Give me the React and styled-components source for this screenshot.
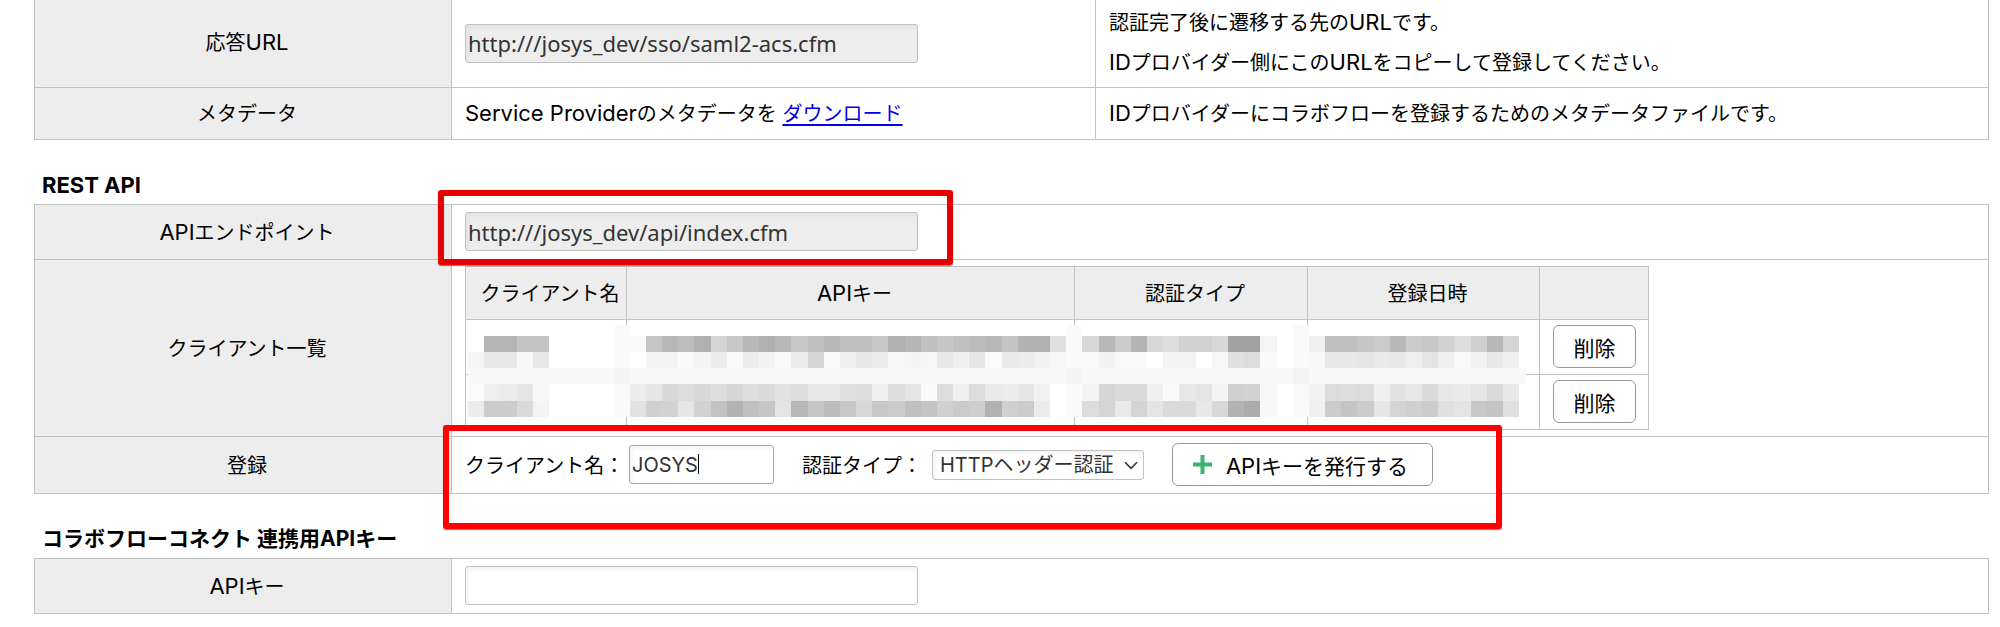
import React from 'react';
import styled, { createGlobalStyle } from 'styled-components';

const GlobalStyle = createGlobalStyle`
  * { box-sizing: border-box; }
  body {
    margin: 0;
    background: #fff;
    color: #000;
    font: 20px/40px Inter, "Noto Sans CJK JP", sans-serif;
  }
  input, select, button { font-family: inherit; margin: 0; }
`;

const line = '#c2c2c2';

const Page = styled.main`
  padding: 0 11px 14px 34px;
`;

const Latin = styled.span`
  font-size: 22px;
  line-height: 1;
`;

const Heading = styled.h2`
  margin: 24px 0 0;
  padding: 2px 0 0 8px;
  font-size: ${(p) => (p.$large ? 22 : 21)}px;
  font-weight: 700;
  line-height: 38px;
`;

const SettingsTable = styled.table`
  width: 100%;
  border-collapse: collapse;
  table-layout: fixed;
  border: 1px solid ${line};
  border-top-width: ${(p) => (p.$continued ? '0' : '1px')};
`;

const LabelCol = styled.col`
  width: 417px;
`;

const ValueCol = styled.col`
  width: 644px;
`;

const LabelCell = styled.th`
  padding: ${(p) => (p.$continued ? '0' : '2px')} 0 0 8px;
  border: 1px solid ${line};
  border-top-width: ${(p) => (p.$continued ? '0' : '1px')};
  background: #ededed;
  font-weight: 400;
  text-align: center;
`;

const ValueCell = styled.td`
  height: ${(p) => p.$height || 55}px;
  padding: ${(p) => (p.$text ? '2px' : '0')} 13px 0;
  border: 1px solid ${line};
  border-top-width: ${(p) => (p.$continued ? '0' : '1px')};
  vertical-align: middle;
`;

const Anchor = styled.div`
  position: relative;
  display: flex;
  align-items: center;
`;

const Callout = styled.div`
  position: absolute;
  z-index: 2;
  top: ${(p) => p.$top}px;
  left: ${(p) => p.$left}px;
  width: ${(p) => p.$width}px;
  height: ${(p) => p.$height}px;
  border: 6px solid ${(p) => p.$color};
  border-radius: 3px;
  box-shadow: 0 1px 1px rgba(0, 0, 0, 0.5);
  pointer-events: none;
`;

const TextField = styled.input`
  display: block;
  width: ${(p) => p.$width || 453}px;
  height: 39px;
  padding: 0 2px;
  border: 1px solid ${(p) => (p.$active ? '#f0983a' : '#c2c2c2')};
  border-radius: 3px;
  outline: none;
  background: ${(p) => (p.readOnly ? '#ededed' : '#fff')};
  box-shadow: inset 2px 2px 4px ${(p) => (p.readOnly ? '#e2e2e2' : '#f1f1f1')};
  color: #333;
  font-family: ${(p) => (p.readOnly ? '"Noto Sans", sans-serif' : 'inherit')};
  font-size: ${(p) => (p.readOnly ? 22 : 20)}px;
`;

const Link = styled.a`
  color: #0000ee;
  text-decoration: underline;
  text-underline-offset: 3px;
`;

const ClientTable = styled.table`
  width: 1184px;
  border-collapse: collapse;
  table-layout: fixed;
`;

const ClientCol = styled.col`
  width: ${(p) => p.$width}px;
`;

const ClientHead = styled.th`
  height: 53px;
  padding: 3px 0 0 8px;
  border: 1px solid ${line};
  background: #ededed;
  font-weight: 400;
  text-align: center;
  white-space: nowrap;
`;

const ClientCell = styled.td`
  height: 55px;
  padding: 0 13px;
  border: 1px solid ${line};
`;

const Button = styled.button`
  display: flex;
  align-items: center;
  justify-content: center;
  gap: 14px;
  height: 43px;
  width: ${(p) => (p.$wide ? '261px' : '83px')};
  padding: 0 ${(p) => (p.$wide ? '4px' : '0')} 0 0;
  border: 1px solid #999;
  border-radius: 6px;
  background: #fff;
  color: #000;
  font-size: 21px;
  white-space: nowrap;
`;

const Mosaic = styled.svg`
  position: absolute;
  z-index: 1;
  top: 59px;
  left: 3px;
  width: 1059px;
  height: 92px;
`;

const Field = styled.div`
  display: flex;
  align-items: center;
  margin-right: ${(p) => p.$after}px;
`;

const FieldLabel = styled.label`
  display: block;
  width: ${(p) => p.$width}px;
  padding-top: 2px;
  white-space: nowrap;
`;

const Focused = styled.div`
  position: relative;
`;

const Caret = styled.span`
  position: absolute;
  top: 9px;
  left: 69px;
  width: 1px;
  height: 20px;
  background: #000;
`;

const SelectBox = styled.div`
  position: relative;
`;

const Select = styled.select`
  display: block;
  appearance: none;
  width: 212px;
  height: 30px;
  padding: 0 28px 0 7px;
  border: 1px solid #c2c2c2;
  border-radius: 3px;
  background: #fff;
  box-shadow: inset 2px 2px 4px #f1f1f1;
  color: #333;
  font-size: 20px;
  line-height: 28px;
`;

const Chevron = styled.svg`
  position: absolute;
  top: 11px;
  right: 6px;
  pointer-events: none;
`;

/* Grey levels of the masked client data, two hex digits per tile. */
const maskRows = [
  'ffb5b5c4c4fffffffffafac6b8beb0d4c8b8b0b8c8c0b8c0c0c8b0b6c0c6c0bcb8c4b2b2e0fad8b8ccb4d8ded2d2d8a2a2f5fffaf0c0c0c6cab8ccc8d2dcd0b8d4',
  'f5e8e8f8e8fffffffffafff4f3faf4ecfaecf2faecd6faf0e8ecf6f4f6e8f0e6fbeaecf2f7fafaf2fafafff3f3fff6e0dcfafffaf8e8e8e6eae8eee4f0faf2e8f0',
  null,
  'fbeeece6f8fffffffffaece6d8dcd8ded6dedae2dee8e8e0dcf0dee6fadcf0dceaece6f2fffaf3d6dadaf0fae8e4f4d0d2f8fffaf2dcdedcf0e2e8dae8eae4dae8',
  'ecccccdaf4fffffffffae2d0d2e6d2c2b2c0c6e4b8c6bcc8d8c8ccc0c4d0caceb2d0ccecfffadcd4ead4e4dadae8d8b2acf8fffaf0ccc4cce6d4d0cce0e4c8c4e0',
];
const dividers = [9, 37, 51];
const tile = 16.17;

function ClientMask() {
  return (
    <Mosaic viewBox="0 0 1059 92" shapeRendering="crispEdges" aria-hidden="true">
      {dividers.map((c) => (
        <rect key={c} x={c * tile} y="0" width={tile} height="12" fill="#fafafa" />
      ))}
      {maskRows.map((row, r) => {
        const y = 11 + r * 16.15;
        if (!row) {
          return (
            <g key={r}>
              <rect x="0" y={y} width="1058" height="16.15" fill="#f9f9f9" />
              {dividers.map((c) => (
                <rect key={c} x={c * tile} y={y} width={tile} height="16.15" fill="#f4f4f4" />
              ))}
            </g>
          );
        }
        return row.match(/../g).map((v, c) => (
          <rect key={`${r}-${c}`} x={c * tile} y={y} width={tile} height="16.15" fill={`#${v}${v}${v}`} />
        ));
      })}
    </Mosaic>
  );
}

export default function App() {
  return (
    <>
      <GlobalStyle />
      <Page>
        <SettingsTable $continued>
          <colgroup>
            <LabelCol />
            <ValueCol />
            <col />
          </colgroup>
          <tbody>
            <tr>
              <LabelCell $continued scope="row"><label htmlFor="acs">応答<Latin>URL</Latin></label></LabelCell>
              <ValueCell $continued $height={87}>
                <TextField id="acs" readOnly defaultValue="http:///josys_dev/sso/saml2-acs.cfm" />
              </ValueCell>
              <ValueCell $continued $height={87}>
                認証完了後に遷移する先の<Latin>URL</Latin>です。<br />
                <Latin>ID</Latin>プロバイダー側にこの<Latin>URL</Latin>をコピーして登録してください。
              </ValueCell>
            </tr>
            <tr>
              <LabelCell scope="row">メタデータ</LabelCell>
              <ValueCell $text $height={52}>
                <Latin>Service Provider</Latin>のメタデータを <Link href="#metadata">ダウンロード</Link>
              </ValueCell>
              <ValueCell $text $height={52}>
                <Latin>ID</Latin>プロバイダーにコラボフローを登録するためのメタデータファイルです。
              </ValueCell>
            </tr>
          </tbody>
        </SettingsTable>

        <Heading $large>REST API</Heading>
        <SettingsTable>
          <colgroup>
            <LabelCol />
            <col />
          </colgroup>
          <tbody>
            <tr>
              <LabelCell scope="row"><label htmlFor="endpoint"><Latin>API</Latin>エンドポイント</label></LabelCell>
              <ValueCell>
                <Anchor>
                  <TextField id="endpoint" readOnly defaultValue="http:///josys_dev/api/index.cfm" />
                  <Callout $top={-22} $left={-27} $width={515} $height={75} $color="#e60000" />
                </Anchor>
              </ValueCell>
            </tr>
            <tr>
              <LabelCell scope="row">クライアント一覧</LabelCell>
              <ValueCell $height={177}>
                <Anchor>
                  <ClientTable>
                    <colgroup>
                      <ClientCol $width={161} />
                      <ClientCol $width={448} />
                      <ClientCol $width={233} />
                      <ClientCol $width={232} />
                      <ClientCol $width={109} />
                    </colgroup>
                    <thead>
                      <tr>
                        <ClientHead>クライアント名</ClientHead>
                        <ClientHead><Latin>API</Latin>キー</ClientHead>
                        <ClientHead>認証タイプ</ClientHead>
                        <ClientHead>登録日時</ClientHead>
                        <ClientHead />
                      </tr>
                    </thead>
                    <tbody>
                      {[1, 2].map((id) => (
                        <tr key={id}>
                          <ClientCell />
                          <ClientCell />
                          <ClientCell />
                          <ClientCell />
                          <ClientCell><Button type="button">削除</Button></ClientCell>
                        </tr>
                      ))}
                    </tbody>
                  </ClientTable>
                  <ClientMask />
                </Anchor>
              </ValueCell>
            </tr>
            <tr>
              <LabelCell scope="row">登録</LabelCell>
              <ValueCell $height={57}>
                <Anchor>
                  <Field $after={28}>
                    <FieldLabel htmlFor="client" $width={164}>クライアント名：</FieldLabel>
                    <Focused>
                      <TextField id="client" $width={145} $active defaultValue="JOSYS" />
                      <Caret />
                    </Focused>
                  </Field>
                  <Field $after={28}>
                    <FieldLabel htmlFor="auth" $width={130}>認証タイプ：</FieldLabel>
                    <SelectBox>
                      <Select id="auth" defaultValue="header">
                        <option value="header">HTTPヘッダー認証</option>
                      </Select>
                      <Chevron width="14" height="9" viewBox="0 0 14 9" fill="none" stroke="#333" strokeWidth="1.6">
                        <path d="M1 1.2 7 7.4 13 1.2" />
                      </Chevron>
                    </SelectBox>
                  </Field>
                  <Button type="button" $wide>
                    <svg width="19" height="19" viewBox="0 0 19 19" stroke="#3cb371" strokeWidth="4" aria-hidden="true">
                      <path d="M9.5 0v19M0 9.5h19" />
                    </svg>
                    <span><Latin>API</Latin>キーを発行する</span>
                  </Button>
                  <Callout $top={-18} $left={-22} $width={1059} $height={104} $color="#ff0000" />
                </Anchor>
              </ValueCell>
            </tr>
          </tbody>
        </SettingsTable>

        <Heading>コラボフローコネクト 連携用API<span>キー</span></Heading>
        <SettingsTable>
          <colgroup>
            <LabelCol />
            <col />
          </colgroup>
          <tbody>
            <tr>
              <LabelCell scope="row"><label htmlFor="key"><Latin>API</Latin>キー</label></LabelCell>
              <ValueCell>
                <TextField id="key" />
              </ValueCell>
            </tr>
          </tbody>
        </SettingsTable>
      </Page>
    </>
  );
}
